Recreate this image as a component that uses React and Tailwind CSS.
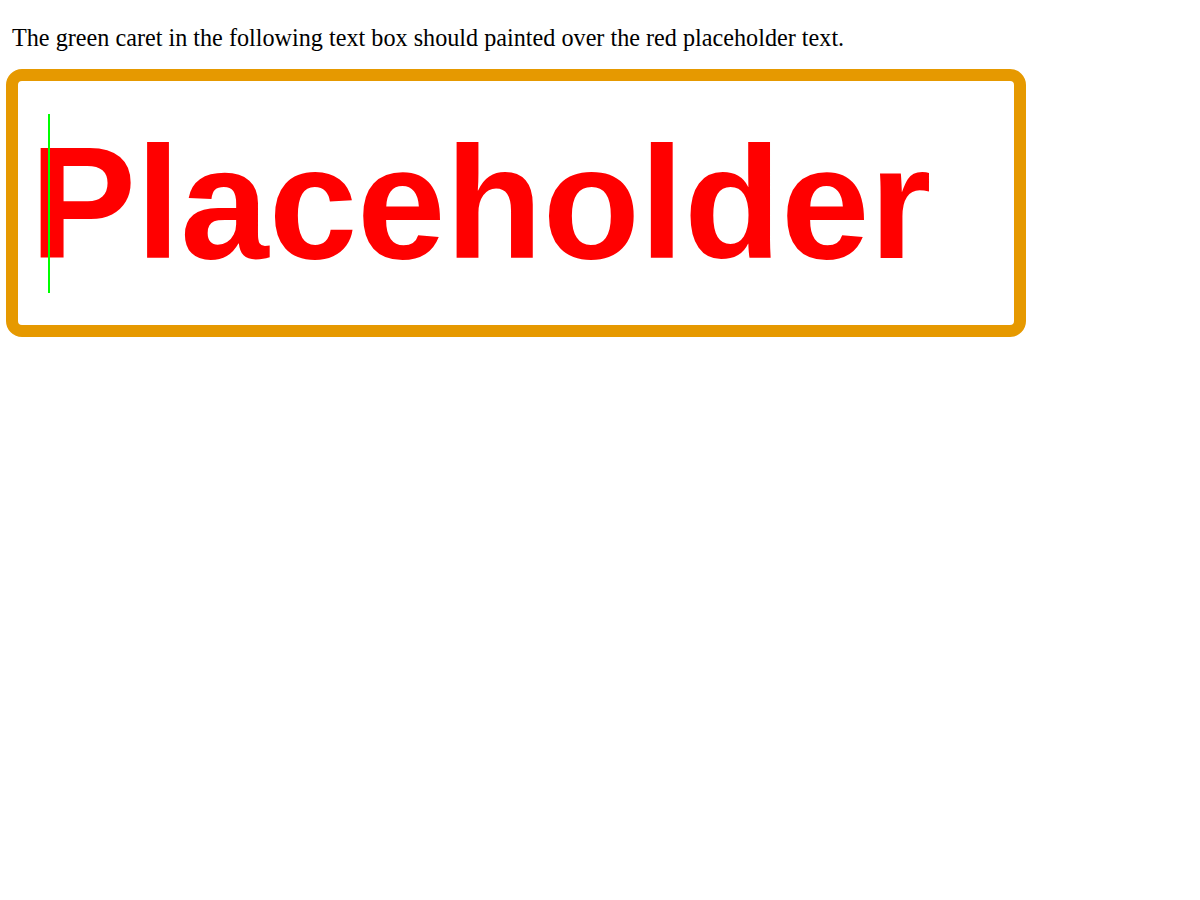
import React from 'react';

function CaretBox() {
  return (
    <div className="relative ml-[6px] mt-[17px] w-[1020px] h-[268px] border-[12px] border-[#e69900] rounded-2xl bg-white flex items-center">
      <div
        className="pl-[12px] text-[159px] leading-[normal] font-bold text-[#ff0000] whitespace-nowrap"
        style={{ fontFamily: '"Liberation Sans", Arial, sans-serif' }}
      >
        Placeholder
      </div>
      {/* caret painted over the placeholder */}
      <div className="absolute left-[30px] top-[33px] w-[2px] h-[179px] bg-[#00ff00]" />
    </div>
  );
}

export default function App() {
  return (
    <div className="min-h-[900px] w-[1200px] bg-white pt-[24px]">
      <p
        className="pl-[12px] text-[24.2px] leading-[normal] text-black"
        style={{ fontFamily: '"Liberation Serif", "Times New Roman", serif' }}
      >
        The green caret in the following text box should painted over the red placeholder text.
      </p>
      <CaretBox />
    </div>
  );
}
